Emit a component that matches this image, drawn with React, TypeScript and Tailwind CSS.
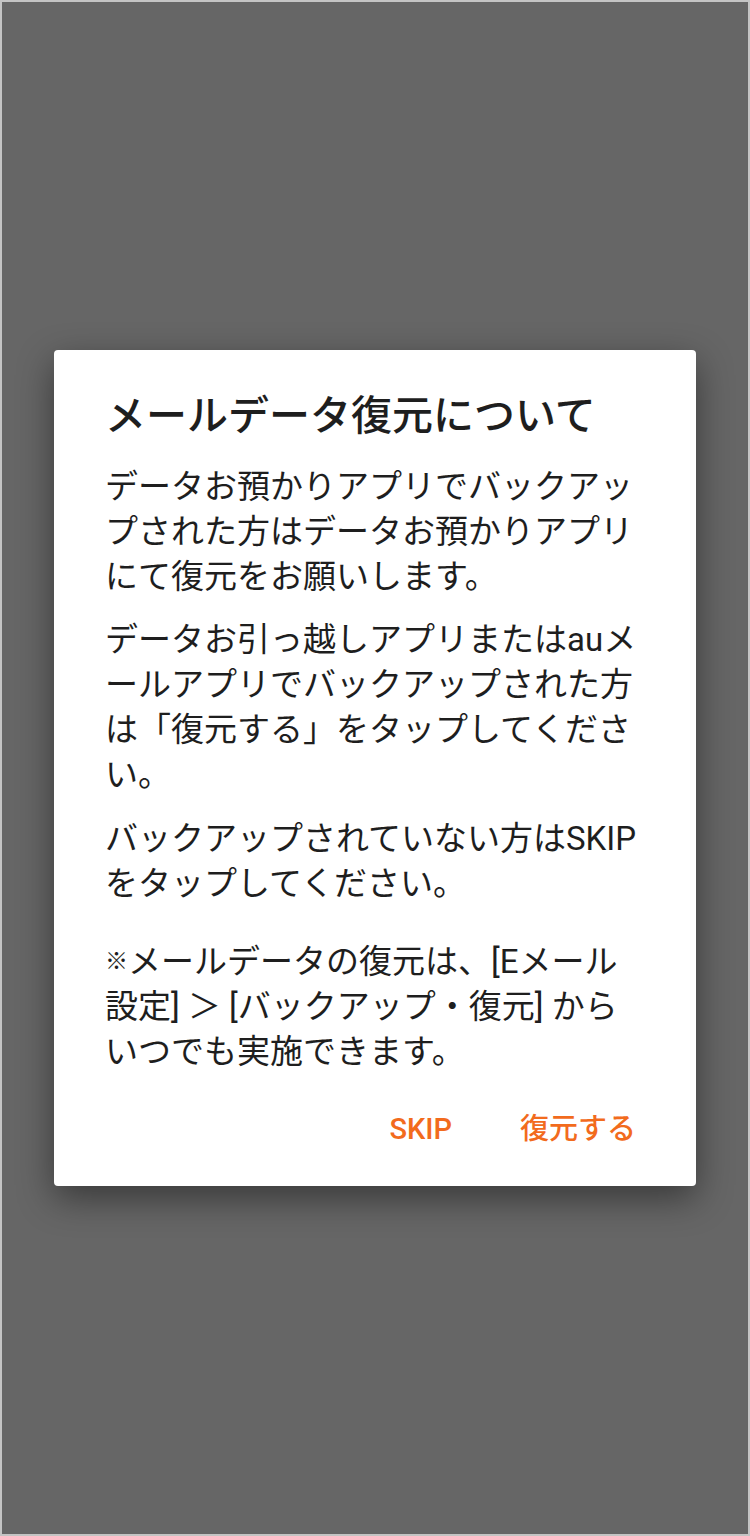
import React from "react";

const font = { fontFamily: '"Roboto", "Noto Sans CJK JP", sans-serif' };

function Para({ lines, className = "" }: { lines: React.ReactNode[]; className?: string }) {
  return (
    <div className={className}>
      {lines.map((l, i) => (
        <div key={i} className="whitespace-nowrap">
          {l}
        </div>
      ))}
    </div>
  );
}

export default function App() {
  return (
    <div
      className="w-[750px] h-[1536px] bg-[#666666] border-2 border-[#c4c4c4] flex items-center justify-center"
      style={font}
    >
      <div className="w-[642px] bg-white rounded-[4px] shadow-[0_12px_36px_rgba(0,0,0,0.45)] pt-[40px] pb-[37px]">
        <div className="px-[51px]">
          <h1 className="text-[41px] leading-[52px] font-medium text-[#1e1e1e] whitespace-nowrap">
            メールデータ復元について
          </h1>
          <div className="mt-[22px] text-[33px] leading-[45px] text-[#1e1e1e]">
            <Para
              lines={[
                "データお預かりアプリでバックアッ",
                "プされた方はデータお預かりアプリ",
                "にて復元をお願いします。",
              ]}
            />
            <Para
              className="mt-[18px]"
              lines={[
                "データお引っ越しアプリまたはauメ",
                "ールアプリでバックアップされた方",
                "は「復元する」をタップしてくださ",
                "い。",
              ]}
            />
            <Para
              className="mt-[19px]"
              lines={["バックアップされていない方はSKIP", "をタップしてください。"]}
            />
            <Para
              className="mt-[33px]"
              lines={[
                <>
                  <span className="text-[23px] align-[4px]">※</span>メールデータの復元は、[Eメール
                </>,
                "設定] ＞ [バックアップ・復元] から",
                "いつでも実施できます。",
              ]}
            />
          </div>
        </div>
        <div className="mt-[35px] flex justify-end items-center gap-[68px] pr-[60px] text-[29px] leading-[40px] font-medium text-[#f26b1d]">
          <span>SKIP</span>
          <span>復元する</span>
        </div>
      </div>
    </div>
  );
}
